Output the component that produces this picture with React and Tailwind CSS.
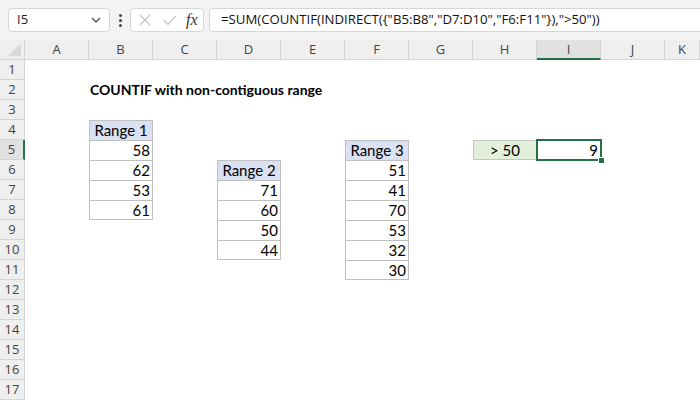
import React from "react";

const COLS = ["A", "B", "C", "D", "E", "F", "G", "H", "I", "J", "K"];
const ROWS = Array.from({ length: 17 }, (_, i) => i + 1);
const FORMULA = '=SUM(COUNTIF(INDIRECT({"B5:B8","D7:D10","F6:F11"}),">50"))';

const cells = {};
function table(col, startRow, title, values) {
  cells[`${col},${startRow}`] = { text: title, kind: "head" };
  values.forEach((v, i) => {
    cells[`${col},${startRow + 1 + i}`] = {
      text: String(v),
      kind: "num",
      last: i === values.length - 1,
    };
  });
}
table("B", 4, "Range 1", [58, 62, 53, 61]);
table("D", 6, "Range 2", [71, 60, 50, 44]);
table("F", 5, "Range 3", [51, 41, 70, 53, 32, 30]);

const cellFont = { fontFamily: 'Lato, "Open Sans", sans-serif' };

function Cell({ col, row }) {
  const c = cells[`${col},${row}`];
  if (row === 2 && col === "B") {
    return (
      <div className="relative h-5">
        <span
          className="absolute left-[1px] top-0 whitespace-nowrap text-[14px] font-bold leading-5 text-black"
          style={cellFont}
        >
          COUNTIF with non-contiguous range
        </span>
      </div>
    );
  }
  if (row === 5 && col === "H") {
    return (
      <div
        className="h-5 border border-[#c6c6c6] bg-[#e2efda] text-center text-[15px] leading-[18px] text-black"
        style={cellFont}
      >
        &gt; 50
      </div>
    );
  }
  if (row === 5 && col === "I") {
    return (
      <div className="relative h-5">
        <div
          className="absolute -left-[1px] -top-[1px] h-[22px] w-[66px] border-2 border-[#217346] pr-[2px] text-right text-[15px] leading-[18px] text-black"
          style={cellFont}
        >
          9
        </div>
        <div className="absolute -bottom-[4px] right-[-4px] h-[7px] w-[7px] border border-white bg-[#217346]" />
      </div>
    );
  }
  if (!c) return <div className="h-5" />;
  if (c.kind === "head") {
    return (
      <div
        className="h-5 border border-b-0 border-[#bfbfbf] bg-[#d9e1f2] text-center text-[15px] leading-[19px] text-black"
        style={cellFont}
      >
        {c.text}
      </div>
    );
  }
  return (
    <div
      className={
        "h-5 border-x border-t border-[#bfbfbf] pr-[2px] text-right text-[15px] leading-[19px] text-black " +
        (c.last ? "border-b" : "")
      }
      style={cellFont}
    >
      {c.text}
    </div>
  );
}

export default function App() {
  return (
    <div
      className="h-[400px] w-[700px] overflow-hidden bg-white"
      style={{ fontFamily: '"Open Sans", "Noto Sans", sans-serif' }}
    >
      {/* toolbar */}
      <div className="flex h-10 items-center bg-[#f3f3f3] pl-2 pr-0">
        <div className="flex h-6 w-[102px] items-center justify-between rounded border border-[#d6d6d6] bg-white pl-2 pr-2 text-[13px] text-[#222]">
          <span>I5</span>
          <svg width="10" height="6" viewBox="0 0 10 6" fill="none" stroke="#444" strokeWidth="1.2">
            <path d="M1 1l4 4 4-4" />
          </svg>
        </div>
        <div className="flex w-[20px] flex-col items-center gap-[2px]">
          <span className="h-[3px] w-[3px] rounded-full bg-[#444]" />
          <span className="h-[3px] w-[3px] rounded-full bg-[#444]" />
          <span className="h-[3px] w-[3px] rounded-full bg-[#444]" />
        </div>
        <div className="flex h-6 w-[74px] items-center rounded border border-[#d6d6d6] bg-white pl-[8px]">
          <svg width="12" height="12" viewBox="0 0 12 12" fill="none" stroke="#c2c2c2" strokeWidth="1.1">
            <path d="M1 1l10 10M11 1L1 11" />
          </svg>
          <svg className="ml-[12px]" width="14" height="11" viewBox="0 0 14 11" fill="none" stroke="#c2c2c2" strokeWidth="1.1">
            <path d="M1 5.5l4 4L13 1" />
          </svg>
          <span
            className="ml-[9px] text-[16px] italic leading-none text-[#333]"
            style={{ fontFamily: '"Liberation Serif", serif' }}
          >
            fx
          </span>
        </div>
        <div className="ml-[5px] flex h-6 flex-1 items-center whitespace-nowrap rounded-l border border-r-0 border-[#d6d6d6] bg-white pl-[11px] text-[13.2px] text-[#111]">
          {FORMULA}
        </div>
      </div>

      {/* grid */}
      <div className="grid grid-cols-[25px_repeat(10,64px)_auto] grid-rows-[20px_repeat(17,20px)]">
        <div className="relative h-5 border-b border-r border-[#d4d4d4] bg-[#efefef]">
          <svg className="absolute bottom-[3px] right-[3px]" width="13" height="13" viewBox="0 0 13 13">
            <path d="M13 0L13 13L0 13Z" fill="#d8d8d8" />
          </svg>
        </div>
        {COLS.map((c) => (
          <div
            key={c}
            className={
              "h-5 border-r text-center text-[13px] leading-[19px] text-[#444] " +
              (c === "I"
                ? "border-b-2 border-r-[#d4d4d4] border-b-[#217346] bg-[#e1e1e1] leading-[18px]"
                : "border-b border-[#d4d4d4] bg-[#efefef]")
            }
          >
            {c}
          </div>
        ))}
        {ROWS.map((r) => (
          <React.Fragment key={r}>
            <div
              className={
                "h-5 border-b text-center text-[13px] leading-[19px] text-[#444] " +
                (r === 5
                  ? "border-r-2 border-r-[#217346] border-b-[#d4d4d4] bg-[#e1e1e1]"
                  : "border-r border-[#d4d4d4] bg-[#efefef]")
              }
            >
              {r}
            </div>
            {COLS.map((c) => (
              <Cell key={c} col={c} row={r} />
            ))}
          </React.Fragment>
        ))}
      </div>
    </div>
  );
}
